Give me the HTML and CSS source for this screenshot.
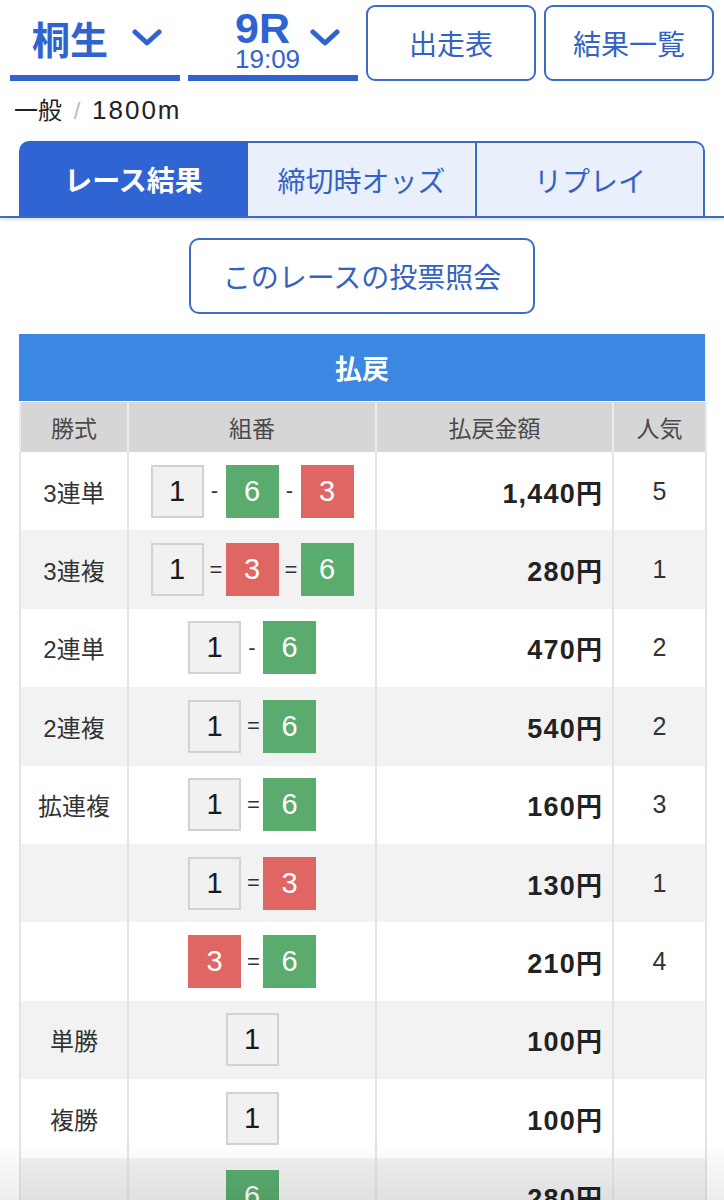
FILE: index.html
```html
<!DOCTYPE html>
<html lang="ja">
<head>
<meta charset="utf-8">
<title>レース結果</title>
<link rel="stylesheet" href="styles.css">
</head>
<body>
<header class="topbar">
  <div class="selector place-sel">
    <span class="place">桐生</span>
    <svg class="chev" viewBox="0 0 30 18" width="30" height="18"><polyline points="3,3 15,14 27,3" fill="none" stroke="#2f63cf" stroke-width="5" stroke-linecap="round" stroke-linejoin="round"/></svg>
  </div>
  <div class="selector race-sel">
    <span class="race"><span class="rno">9R</span><span class="rtime">19:09</span></span>
    <svg class="chev" viewBox="0 0 30 18" width="30" height="18"><polyline points="3,3 15,14 27,3" fill="none" stroke="#2f63cf" stroke-width="5" stroke-linecap="round" stroke-linejoin="round"/></svg>
  </div>
  <a class="obtn">出走表</a>
  <a class="obtn">結果一覧</a>
</header>
<div class="meta"><span class="jp">一般</span> <span class="slash">/</span> <span class="dist">1800m</span></div>
<nav class="tabs">
  <div class="tab active">レース結果</div>
  <div class="tab">締切時オッズ</div>
  <div class="tab last">リプレイ</div>
</nav>
<div class="inquiry"><a class="obtn wide">このレースの投票照会</a></div>
<section class="payout">
  <div class="ptitle">払戻</div>
  <table class="ptable">
    <thead>
      <tr><th class="c1">勝式</th><th class="c2">組番</th><th class="c3">払戻金額</th><th class="c4">人気</th></tr>
    </thead>
    <tbody>
      <tr><td class="kind">3連単</td><td><div class="combo"><span class="bx w">1</span><span class="sep">-</span><span class="bx g">6</span><span class="sep">-</span><span class="bx r">3</span></div></td><td class="amt">1,440<span class="yen">円</span></td><td class="pop">5</td></tr>
      <tr><td class="kind">3連複</td><td><div class="combo"><span class="bx w">1</span><span class="sep">=</span><span class="bx r">3</span><span class="sep">=</span><span class="bx g">6</span></div></td><td class="amt">280<span class="yen">円</span></td><td class="pop">1</td></tr>
      <tr><td class="kind">2連単</td><td><div class="combo"><span class="bx w">1</span><span class="sep">-</span><span class="bx g">6</span></div></td><td class="amt">470<span class="yen">円</span></td><td class="pop">2</td></tr>
      <tr><td class="kind">2連複</td><td><div class="combo"><span class="bx w">1</span><span class="sep">=</span><span class="bx g">6</span></div></td><td class="amt">540<span class="yen">円</span></td><td class="pop">2</td></tr>
      <tr><td class="kind">拡連複</td><td><div class="combo"><span class="bx w">1</span><span class="sep">=</span><span class="bx g">6</span></div></td><td class="amt">160<span class="yen">円</span></td><td class="pop">3</td></tr>
      <tr><td class="kind"></td><td><div class="combo"><span class="bx w">1</span><span class="sep">=</span><span class="bx r">3</span></div></td><td class="amt">130<span class="yen">円</span></td><td class="pop">1</td></tr>
      <tr><td class="kind"></td><td><div class="combo"><span class="bx r">3</span><span class="sep">=</span><span class="bx g">6</span></div></td><td class="amt">210<span class="yen">円</span></td><td class="pop">4</td></tr>
      <tr><td class="kind">単勝</td><td><div class="combo"><span class="bx w">1</span></div></td><td class="amt">100<span class="yen">円</span></td><td class="pop"></td></tr>
      <tr><td class="kind">複勝</td><td><div class="combo"><span class="bx w">1</span></div></td><td class="amt">100<span class="yen">円</span></td><td class="pop"></td></tr>
      <tr><td class="kind"></td><td><div class="combo"><span class="bx g">6</span></div></td><td class="amt">280<span class="yen">円</span></td><td class="pop"></td></tr>
    </tbody>
  </table>
</section>
<div class="shade"></div>
</body>
</html>
```
FILE: styles.css
```css
* { box-sizing: border-box; }
html, body { margin: 0; padding: 0; background: #fff; }
body {
  font-family: "Liberation Sans", "Noto Sans CJK JP", sans-serif;
  color: #222;
  width: 724px;
}
.topbar {
  display: grid;
  grid-template-columns: repeat(4, 170px);
  column-gap: 8px;
  padding: 5px 10px 0 10px;
  height: 82px;
}
.selector {
  display: flex;
  align-items: center;
  border-bottom: 6px solid #2f63cf;
  height: 76px;
  color: #2f63cf;
}
.place-sel { padding-left: 22px; gap: 24px; }
.race-sel { padding-left: 47px; gap: 10px; }
.place {
  font-family: "Noto Sans CJK JP", sans-serif;
  font-weight: 700;
  font-size: 38px;
  line-height: 1;
  margin-top: -4px;
}
.chev { display: block; margin-top: -4px; }
.race {
  display: flex;
  flex-direction: column;
  align-items: flex-start;
}
.rno {
  font-weight: 700;
  font-size: 43px;
  line-height: 36px;
}
.rtime {
  font-size: 26px;
  line-height: 22px;
  margin-top: 2px;
  font-weight: 400;
}
.obtn {
  display: flex;
  align-items: center;
  justify-content: center;
  height: 76px;
  border: 2px solid #3d6cc8;
  border-radius: 9px;
  color: #3562c2;
  font-family: "Noto Sans CJK JP", sans-serif;
  font-size: 28px;
  text-decoration: none;
  background: #fff;
}
.meta {
  padding: 12px 0 0 14px;
  height: 44px;
  font-size: 24px;
  line-height: 30px;
  color: #222;
}
.meta .jp { font-family: "Noto Sans CJK JP", sans-serif; }
.meta .dist { font-size: 26px; letter-spacing: 2px; }
.slash { color: #bdbdbd; font-weight: 300; margin: 0 5px; }
.tabs {
  display: grid;
  grid-template-columns: 229px 229px 228px;
  padding: 0 19px;
  margin-top: 15px;
  border-bottom: 2px solid #3d6cc8;
  box-shadow: 0 2px 3px rgba(0,0,0,0.12);
}
.tab {
  height: 75px;
  display: flex;
  align-items: center;
  justify-content: center;
  font-family: "Noto Sans CJK JP", sans-serif;
  font-size: 28px;
  color: #3562c2;
  background: #e9f0fc;
  border: 2px solid #3d6cc8;
  border-bottom: none;
  border-left: none;
}
.tab.active {
  background: #2f64d2;
  color: #fff;
  font-weight: 700;
  border: none;
  border-top-left-radius: 10px;
}
.tab.last { border-top-right-radius: 10px; }
.inquiry {
  display: flex;
  justify-content: center;
  padding-top: 20px;
}
.obtn.wide {
  width: 346px;
  font-size: 28px;
  border-radius: 10px;
}
.payout {
  margin: 20px 19px 0 19px;
}
.ptitle {
  height: 67px;
  background: #3b87e1;
  color: #fff;
  font-family: "Noto Sans CJK JP", sans-serif;
  font-weight: 700;
  font-size: 27px;
  display: flex;
  align-items: center;
  justify-content: center;
}
.ptable {
  width: 686px;
  border-collapse: collapse;
  table-layout: fixed;
  margin-top: 1px;
}
.ptable th {
  height: 50px;
  background: #d6d6d6;
  color: #4a4a4a;
  font-weight: 400;
  font-size: 23px;
  font-family: "Noto Sans CJK JP", sans-serif;
  border-left: 2px solid #eaeaea;
  border-right: 2px solid #eaeaea;
  padding: 0;
}
.c1 { width: 108px; }
.c2 { width: 248px; }
.c3 { width: 237px; }
.c4 { width: 93px; }
.ptable td {
  height: 78.4px;
  padding: 0;
  border-left: 2px solid #e4e4e4;
  border-right: 2px solid #e4e4e4;
  vertical-align: middle;
}
.ptable tbody tr:nth-child(even) td { background: #f2f2f2; }
.kind {
  text-align: center;
  font-size: 24px;
  color: #333;
  font-family: "Liberation Sans", "Noto Sans CJK JP", sans-serif;
}
.combo {
  display: flex;
  justify-content: center;
  align-items: center;
  gap: 6px;
}
.bx {
  width: 53px;
  height: 53px;
  display: flex;
  align-items: center;
  justify-content: center;
  font-size: 29px;
  font-family: "Liberation Sans", sans-serif;
}
.bx.w { background: #f1f1f1; border: 2px solid #d2d2d2; color: #1a1a1a; }
.bx.g { background: #59ac6e; color: #fff; }
.bx.r { background: #e06664; color: #fff; }
.sep { font-size: 22px; color: #333; width: 10px; text-align: center; }
.amt {
  text-align: right;
  padding-right: 10px !important;
  font-weight: 700;
  font-size: 27px;
  letter-spacing: 1.2px;
  color: #222;
}
.amt .yen {
  font-family: "Noto Sans CJK JP", sans-serif;
  font-size: 26px;
  letter-spacing: 0;
}
.pop {
  text-align: center;
  font-size: 25px;
  color: #333;
}
.shade {
  position: fixed;
  left: 0;
  right: 0;
  bottom: 0;
  height: 60px;
  background: linear-gradient(to bottom, rgba(0,0,0,0), rgba(0,0,0,0.07));
  pointer-events: none;
}
```
